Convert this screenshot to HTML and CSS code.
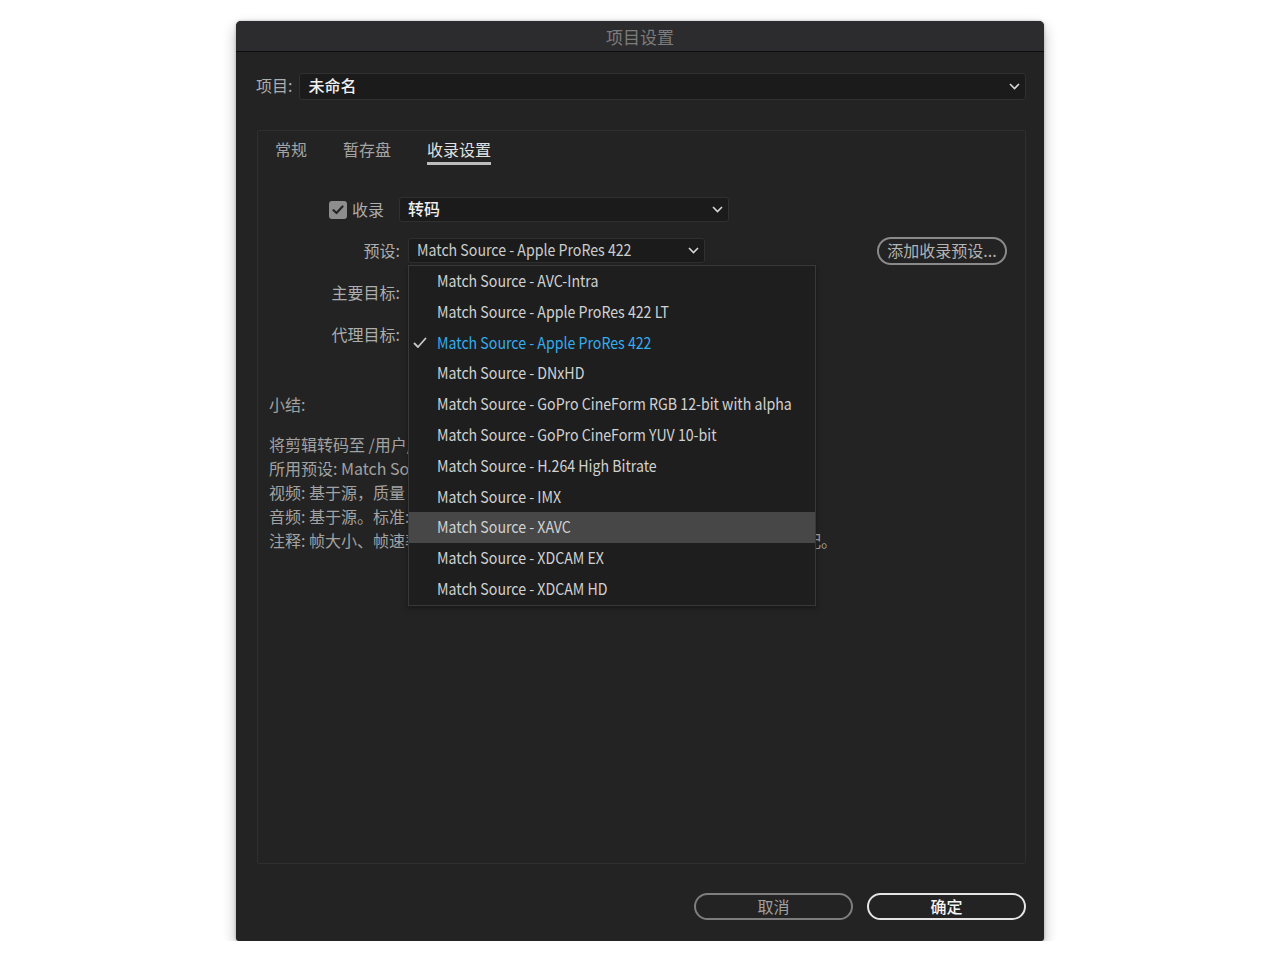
FILE: index.html
```html
<!DOCTYPE html>
<html lang="zh-CN">
<head>
<meta charset="utf-8">
<title>项目设置</title>
<link rel="stylesheet" href="styles.css">
</head>
<body>
<div class="window">
  <div class="titlebar">项目设置</div>
  <div class="content">
    <div class="project-row">
      <span class="label">项目:</span>
      <div class="select select-project">
        <span class="select-text strong">未命名</span>
        <svg class="chev" width="11" height="7" viewBox="0 0 11 7"><path d="M1 1 L5.5 5.5 L10 1" fill="none" stroke="#d8d8d8" stroke-width="1.6"/></svg>
      </div>
    </div>

    <div class="panel">
      <div class="tabs">
        <span class="tab">常规</span>
        <span class="tab">暂存盘</span>
        <span class="tab active">收录设置</span>
      </div>

      <div class="form">
        <div class="row row-ingest">
          <div class="cell-ingest">
            <span class="checkbox">
              <svg width="12" height="10" viewBox="0 0 12 10"><path d="M1.5 5.2 L4.5 8 L10.5 1.5" fill="none" stroke="#262626" stroke-width="2.2" stroke-linecap="round" stroke-linejoin="round"/></svg>
            </span>
            <span class="label">收录</span>
          </div>
          <div class="select select-ingest">
            <span class="select-text strong">转码</span>
            <svg class="chev" width="11" height="7" viewBox="0 0 11 7"><path d="M1 1 L5.5 5.5 L10 1" fill="none" stroke="#d8d8d8" stroke-width="1.6"/></svg>
          </div>
        </div>

        <div class="row row-preset">
          <div class="cell-label label">预设:</div>
          <div class="preset-wrap">
            <div class="select select-preset">
              <span class="select-text"><span class="latin">Match Source - Apple ProRes 422</span></span>
              <svg class="chev" width="11" height="7" viewBox="0 0 11 7"><path d="M1 1 L5.5 5.5 L10 1" fill="none" stroke="#d8d8d8" stroke-width="1.6"/></svg>
            </div>
            <ul class="menu">
              <li class="menu-item"><span class="latin">Match Source - AVC-Intra</span></li>
              <li class="menu-item"><span class="latin">Match Source - Apple ProRes 422 LT</span></li>
              <li class="menu-item checked">
                <svg class="check" width="14" height="12" viewBox="0 0 14 12"><path d="M1.5 6.5 L5 10 L12.5 1.5" fill="none" stroke="#c8c8c8" stroke-width="1.8" stroke-linecap="round" stroke-linejoin="round"/></svg>
                <span class="latin">Match Source - Apple ProRes 422</span></li>
              <li class="menu-item"><span class="latin">Match Source - DNxHD</span></li>
              <li class="menu-item"><span class="latin">Match Source - GoPro CineForm RGB 12-bit with alpha</span></li>
              <li class="menu-item"><span class="latin">Match Source - GoPro CineForm YUV 10-bit</span></li>
              <li class="menu-item"><span class="latin">Match Source - H.264 High Bitrate</span></li>
              <li class="menu-item"><span class="latin">Match Source - IMX</span></li>
              <li class="menu-item hover"><span class="latin">Match Source - XAVC</span></li>
              <li class="menu-item"><span class="latin">Match Source - XDCAM EX</span></li>
              <li class="menu-item"><span class="latin">Match Source - XDCAM HD</span></li>
            </ul>
          </div>
          <button class="btn btn-add">添加收录预设...</button>
        </div>

        <div class="row row-dest">
          <div class="cell-label label">主要目标:</div>
        </div>
        <div class="row row-dest">
          <div class="cell-label label">代理目标:</div>
        </div>

        <div class="summary">
          <div class="summary-title">小结:</div>
          <div class="summary-lines">
            <div>将剪辑转码至 /用户/文稿/Adobe/Premiere Pro</div>
            <div>所用预设: Match Source - Apple ProRes 422</div>
            <div>视频: 基于源，质量 100，Apple ProRes 422</div>
            <div>音频: 基于源。标准: 未压缩</div>
            <div>注释: 帧大小、帧速率、像素长宽比、场序、音频声道将与源剪辑的设置相匹配。</div>
          </div>
        </div>
      </div>
    </div>

    <div class="footer">
      <button class="btn btn-cancel">取消</button>
      <button class="btn btn-ok">确定</button>
    </div>
  </div>
</div>
</body>
</html>
```

FILE: styles.css
```css
* { box-sizing: border-box; }

html, body {
  margin: 0;
  padding: 0;
  background: #ffffff;
}

body {
  font-family: "Noto Sans CJK SC", "Noto Sans", sans-serif;
  font-size: 16px;
  color: #a8a8a8;
}

.window {
  margin: 21px 0 0 236px;
  width: 808px;
  height: 920px;
  background: #232323;
  border-radius: 5px 5px 3px 3px;
  box-shadow: 0 6px 14px rgba(0, 0, 0, 0.28), 0 0 3px rgba(0, 0, 0, 0.25);
  display: flex;
  flex-direction: column;
  overflow: hidden;
}

.titlebar {
  height: 31px;
  flex: none;
  background: #2c2c2e;
  border-bottom: 1px solid #0c0c0c;
  text-align: center;
  font-size: 17px;
  line-height: 31px;
  color: #7c7c7c;
}

.content {
  flex: 1;
  display: flex;
  flex-direction: column;
  padding: 21px 18px 21px 20px;
}

.label {
  color: #adadad;
}

.latin {
  display: inline-block;
  transform: scaleX(0.885);
  transform-origin: 0 50%;
  white-space: nowrap;
}

.project-row {
  display: flex;
  align-items: center;
  height: 27px;
  gap: 7px;
}

.project-row .label {
  padding-bottom: 3px;
}

.select {
  display: flex;
  align-items: center;
  justify-content: space-between;
  background: #1b1b1b;
  border: 1px solid #303030;
  border-radius: 3px;
  padding: 0 5px 3px 8px;
  line-height: 22px;
}

.select .chev {
  margin-top: 3px;
}

.select-text {
  color: #cdcdcd;
  white-space: nowrap;
}

.select-text.strong {
  color: #f0f0f0;
  font-weight: 500;
}

.select-project {
  flex: 1;
  height: 27px;
}

.chev { flex: none; }

.panel {
  margin-top: 30px;
  margin-left: 1px;
  flex: 1;
  border: 1px solid #2f2f2f;
  border-radius: 2px;
  display: flex;
  flex-direction: column;
}

.tabs {
  display: flex;
  gap: 36px;
  padding: 7px 0 0 17px;
}

.tab {
  line-height: 22px;
  padding-bottom: 2px;
  border-bottom: 3px solid transparent;
  color: #a4a4a4;
}

.tab.active {
  color: #e2e2e2;
  border-bottom-color: #bdbdbd;
}

.form {
  margin-top: 32px;
  display: flex;
  flex-direction: column;
}

.row {
  display: flex;
  align-items: center;
  height: 25px;
}

.cell-ingest {
  width: 141px;
  display: flex;
  align-items: center;
  justify-content: flex-end;
  gap: 5px;
  padding-right: 15px;
}

.cell-ingest .label {
  padding-bottom: 2px;
}

.checkbox {
  width: 18px;
  height: 18px;
  border-radius: 3px;
  background: #8e8e8e;
  display: flex;
  align-items: center;
  justify-content: center;
}

.select-ingest {
  width: 330px;
  height: 25px;
}

.row-preset {
  margin-top: 16px;
}

.cell-label {
  width: 150px;
  text-align: right;
  padding-right: 8px;
  padding-bottom: 2px;
  white-space: nowrap;
}

.preset-wrap {
  position: relative;
  width: 297px;
  height: 25px;
}

.select-preset {
  height: 25px;
}

.menu {
  position: absolute;
  top: 27px;
  left: 0;
  width: 408px;
  margin: 0;
  padding: 0;
  list-style: none;
  background: #1e1e1e;
  border: 1px solid #393939;
  box-shadow: 0 2px 6px rgba(0, 0, 0, 0.35);
  z-index: 10;
}

.menu-item {
  position: relative;
  height: 30.8px;
  line-height: 28.8px;
  padding: 0 0 2px 28px;
  color: #d2d2d2;
  white-space: nowrap;
}

.menu-item.checked {
  color: #35acec;
}

.menu-item.hover {
  background: #474747;
}

.check {
  position: absolute;
  left: 4px;
  top: 9px;
}

.btn {
  font-family: inherit;
  font-size: 16px;
  background: transparent;
  border-radius: 15px;
  padding: 0;
  cursor: default;
}

.btn-add {
  margin-left: auto;
  margin-right: 18px;
  width: 130px;
  height: 28px;
  border: 2px solid #8a8a8a;
  color: #b4b4b4;
  line-height: 22px;
  padding-bottom: 2px;
}

.row-dest {
  margin-top: 17px;
}

.summary {
  margin-top: 45px;
  padding-left: 11px;
  color: #a2a2a2;
  line-height: 24px;
}

.summary-lines {
  margin-top: 16px;
  white-space: nowrap;
}

.footer {
  display: flex;
  justify-content: flex-end;
  gap: 14px;
  margin-top: 29px;
}

.btn-cancel,
.btn-ok {
  width: 159px;
  height: 27px;
  line-height: 21px;
}

.btn-cancel {
  border: 2px solid #7e7e7e;
  color: #a0a0a0;
}

.btn-ok {
  border: 2px solid #e4e4e4;
  color: #f4f4f4;
  font-weight: 500;
}
```
